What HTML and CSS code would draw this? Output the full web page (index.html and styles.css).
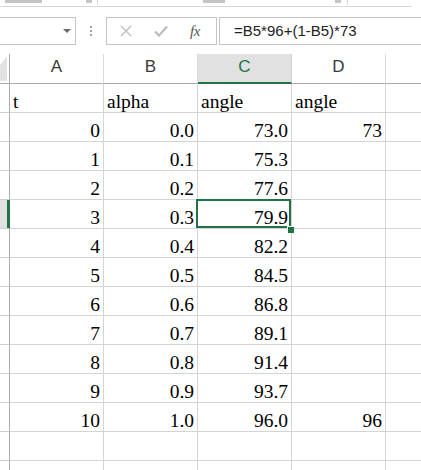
FILE: index.html
```html
<!DOCTYPE html>
<html>
<head>
<meta charset="utf-8">
<link rel="stylesheet" href="styles.css">
</head>
<body>
<div class="ribbon">
  <span class="frag f1"></span>
  <span class="frag f2"></span>
  <span class="sep s1"></span>
  <span class="frag f3"></span>
  <span class="frag f4"></span>
  <span class="sep s2"></span>
</div>
<div class="fbar">
  <div class="namebox"><span class="arrow"></span></div>
  <div class="dots"><i></i><i></i><i></i></div>
  <div class="btns">
    <svg class="ic-x" width="12" height="12" viewBox="0 0 12 12"><path d="M1 1 L11 11 M11 1 L1 11" stroke="#bdbdbd" stroke-width="1.4" fill="none"/></svg>
    <svg class="ic-ok" width="14" height="12" viewBox="0 0 14 12"><path d="M1 6.5 L5 10.5 L13 1.5" stroke="#bdbdbd" stroke-width="2.2" fill="none"/></svg>
    <span class="fx">fx</span>
  </div>
  <div class="formula">=B5*96+(1-B5)*73</div>
</div>
<div class="sheet">
  <div class="hd corner"><span class="tri"></span></div>
  <div class="hd col">A</div>
  <div class="hd col">B</div>
  <div class="hd col sel">C</div>
  <div class="hd col">D</div>
  <div class="hd col last"></div>

  <div class="rh"></div><div class="c">t</div><div class="c">alpha</div><div class="c">angle</div><div class="c">angle</div><div class="c last"></div>
  <div class="rh"></div><div class="c n">0</div><div class="c n">0.0</div><div class="c n">73.0</div><div class="c n">73</div><div class="c last"></div>
  <div class="rh"></div><div class="c n">1</div><div class="c n">0.1</div><div class="c n">75.3</div><div class="c n"></div><div class="c last"></div>
  <div class="rh"></div><div class="c n">2</div><div class="c n">0.2</div><div class="c n">77.6</div><div class="c n"></div><div class="c last"></div>
  <div class="rh rsel"></div><div class="c n">3</div><div class="c n">0.3</div><div class="c n active">79.9<span class="handle"></span></div><div class="c n"></div><div class="c last"></div>
  <div class="rh"></div><div class="c n">4</div><div class="c n">0.4</div><div class="c n">82.2</div><div class="c n"></div><div class="c last"></div>
  <div class="rh"></div><div class="c n">5</div><div class="c n">0.5</div><div class="c n">84.5</div><div class="c n"></div><div class="c last"></div>
  <div class="rh"></div><div class="c n">6</div><div class="c n">0.6</div><div class="c n">86.8</div><div class="c n"></div><div class="c last"></div>
  <div class="rh"></div><div class="c n">7</div><div class="c n">0.7</div><div class="c n">89.1</div><div class="c n"></div><div class="c last"></div>
  <div class="rh"></div><div class="c n">8</div><div class="c n">0.8</div><div class="c n">91.4</div><div class="c n"></div><div class="c last"></div>
  <div class="rh"></div><div class="c n">9</div><div class="c n">0.9</div><div class="c n">93.7</div><div class="c n"></div><div class="c last"></div>
  <div class="rh"></div><div class="c n">10</div><div class="c n">1.0</div><div class="c n">96.0</div><div class="c n">96</div><div class="c last"></div>
  <div class="rh"></div><div class="c"></div><div class="c"></div><div class="c"></div><div class="c"></div><div class="c last"></div>
  <div class="rh"></div><div class="c"></div><div class="c"></div><div class="c"></div><div class="c"></div><div class="c last"></div>
</div>
</body>
</html>
```
FILE: styles.css
```css
html, body {
  margin: 0;
  padding: 0;
  background: #ffffff;
  overflow: hidden;
}
body {
  width: 421px;
  height: 470px;
  font-family: "Liberation Serif", "Times New Roman", serif;
}

.ribbon {
  height: 6px;
  width: 412px;
  border-bottom: 1px solid #d6d6d6;
  display: flex;
  align-items: flex-start;
}
.frag {
  display: block;
  height: 3px;
  background: #c4c4c4;
}
.f1 { width: 37px; margin-left: 5px; }
.f2 { width: 6px; margin-left: 44px; }
.sep { display: block; width: 1px; height: 5px; background: #d6d6d6; }
.s1 { margin-left: 5px; }
.f3 { width: 22px; margin-left: 105px; }
.f4 { width: 6px; margin-left: 110px; }
.s2 { margin-left: 6px; }

.fbar {
  display: flex;
  align-items: center;
  margin-top: 10px;
  height: 28px;
  margin-bottom: 9px;
}
.namebox {
  box-sizing: border-box;
  width: 77px;
  height: 28px;
  margin-left: -1px;
  border: 1px solid #c6c6c6;
  position: relative;
  display: flex;
  align-items: center;
  justify-content: flex-end;
  padding-right: 4px;
}
.arrow {
  width: 0;
  height: 0;
  border-left: 4px solid transparent;
  border-right: 4px solid transparent;
  border-top: 4px solid #6b6b6b;
}
.dots {
  width: 30px;
  display: flex;
  flex-direction: column;
  align-items: center;
  gap: 2px;
}
.dots i {
  display: block;
  width: 2px;
  height: 2px;
  background: #a0a0a0;
}
.btns {
  box-sizing: border-box;
  width: 111px;
  height: 28px;
  border: 1px solid #c6c6c6;
  display: flex;
  align-items: center;
}
.ic-x { margin-left: 13px; }
.ic-ok { margin-left: 22px; }
.fx {
  margin-left: 22px;
  font-family: "Liberation Serif", serif;
  font-style: italic;
  font-size: 15px;
  color: #555555;
  letter-spacing: -0.5px;
}
.formula {
  box-sizing: border-box;
  flex: 1;
  margin-left: 2px;
  margin-right: -2px;
  height: 28px;
  border: 1px solid #c6c6c6;
  padding-left: 14px;
  font-family: "Liberation Sans", Arial, sans-serif;
  font-size: 15px;
  color: #222222;
  line-height: 26px;
}

.sheet {
  display: grid;
  grid-template-columns: 10px 94px 94px 94px 94px 1fr;
  grid-template-rows: 30px repeat(14, 29px);
}
.hd {
  box-sizing: border-box;
  border-bottom: 1px solid #ababab;
  font-family: "Liberation Sans", Arial, sans-serif;
  font-size: 17px;
  color: #3a3a3a;
  display: flex;
  align-items: center;
  justify-content: center;
  padding-bottom: 3px;
}
.corner {
  border-right: 1px solid #ababab;
  position: relative;
  overflow: hidden;
}
.tri {
  position: absolute;
  right: 2px;
  bottom: 2px;
  width: 22px;
  height: 24px;
  background: #e2e2e2;
  clip-path: polygon(100% 0, 100% 100%, 0 100%);
}
.col {
  border-right: 1px solid #dadada;
}
.col.last { border-right: none; }
.col.sel {
  background: #e1e1e1;
  color: #217346;
  border-bottom: 2px solid #217346;
  border-right: 1px solid #d0d0d0;
}

.rh {
  box-sizing: border-box;
  border-right: 1px solid #ababab;
  border-bottom: 1px solid #d0d0d0;
}
.rh.rsel {
  background: #e1e1e1;
  border-right: 1px solid #217346;
  box-shadow: inset -2px 0 0 #217346;
}

.c {
  box-sizing: border-box;
  border-right: 1px solid #d4d4d4;
  border-bottom: 1px solid #d4d4d4;
  font-size: 19.5px;
  line-height: 18px;
  color: #000000;
  display: flex;
  align-items: flex-end;
  padding: 0 3px 1px 3px;
  white-space: nowrap;
}
.c.n { justify-content: flex-end; }
.c.last { border-right: none; }
.active {
  position: relative;
}
.active::after {
  content: "";
  position: absolute;
  left: -2px;
  top: -1px;
  right: 0;
  bottom: 0;
  border: 2px solid #217346;
  pointer-events: none;
}
.handle {
  position: absolute;
  left: 89px;
  top: 26px;
  width: 6px;
  height: 6px;
  background: #217346;
  border-left: 1px solid #ffffff;
  border-top: 1px solid #ffffff;
  z-index: 2;
}
```
